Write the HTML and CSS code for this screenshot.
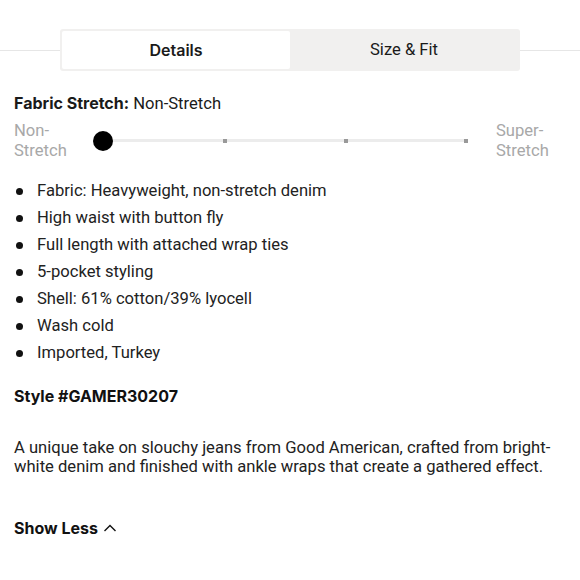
FILE: index.html
```html
<!DOCTYPE html>
<html lang="en">
<head>
	<meta charset="UTF-8">
	<title>Details</title>
	<link rel="stylesheet" href="styles.css">
</head>
<body>
	<div class="tabbar">
		<div class="tabs">
			<a class="tab active">Details</a>
			<a class="tab">Size &amp; Fit</a>
		</div>
	</div>

	<div class="content">
		<h3 class="stretch-title"><b>Fabric Stretch:</b> Non-Stretch</h3>
		<div class="stretch">
			<span class="stretch-label">Non-<br>Stretch</span>
			<div class="scale">
				<div class="track">
					<i class="tick"></i><i class="tick"></i><i class="tick"></i><i class="tick"></i>
				</div>
				<span class="knob"></span>
			</div>
			<span class="stretch-label right">Super-<br>Stretch</span>
		</div>

		<ul class="facts">
			<li>Fabric: Heavyweight, non-stretch denim</li>
			<li>High waist with button fly</li>
			<li>Full length with attached wrap ties</li>
			<li>5-pocket styling</li>
			<li>Shell: 61% cotton/39% lyocell</li>
			<li>Wash cold</li>
			<li>Imported, Turkey</li>
		</ul>

		<h3 class="style-no">Style #GAMER30207</h3>

		<p class="desc">A unique take on slouchy jeans from Good American, crafted from bright-white denim and finished with ankle wraps that create a gathered effect.</p>

		<a class="toggle">Show Less
			<svg width="14" height="10" viewBox="0 0 14 10"><path d="M1.5 8 L7 2.5 L12.5 8" fill="none" stroke="#111" stroke-width="1.4"/></svg>
		</a>
	</div>
</body>
</html>
```

FILE: styles.css
```css
*{margin:0; padding:0; box-sizing:border-box;}
body{background:#fff; color:#222; font-family:Roboto, "Liberation Sans", sans-serif; font-size:16.6px; line-height:20px;}
.tab.active,.stretch-title b,.style-no,.toggle{font-family:Inter, "Liberation Sans", sans-serif; font-size:16px;}

/* tabs with the thin rule running behind */
.tabbar{display:flex; align-items:center; margin-top:29px;}
.tabbar:before,.tabbar:after{content:""; flex:1; border-top:1px solid #e6e6e6;}
.tabs{width:460px; height:42px; display:flex; padding:2px; background:#f1f0ef; border-radius:3px;}
.tab{flex:1; display:flex; align-items:center; justify-content:center; color:#1a1a1a; cursor:pointer;}
.tab.active{background:#fff; font-weight:600; border-radius:2px;}

.content{padding:0 14px;}

.stretch-title{margin-top:22px; font-size:16.6px; font-weight:400; color:#1a1a1a;}
.stretch-title b{font-weight:700;}

.stretch{display:flex; align-items:center; margin-top:7px; height:40px;}
.stretch-label{color:#a8a8a8; width:72px;}
.stretch-label.right{width:auto; margin-left:30px;}
.scale{position:relative; width:363px; margin-left:17px; height:20px;}
.track{position:absolute; left:0; right:0; top:8px; height:3px; background:#ececec; display:flex; justify-content:space-between; align-items:center;}
.tick{display:block; width:4px; height:4px; background:#999; margin-right:-2px;}
.tick:first-child{visibility:hidden;}
.knob{position:absolute; left:-10px; top:0; width:20px; height:20px; border-radius:50%; background:#000;}

.facts{list-style:none; margin-top:16px;}
.facts li{position:relative; padding-left:23px; line-height:27px;}
.facts li:before{content:""; position:absolute; left:2px; top:11px; width:7px; height:7px; border-radius:50%; background:#111;}

.style-no{margin-top:20px; font-weight:700; color:#111;}

.desc{margin-top:32px; line-height:19px;}

.toggle{display:inline-flex; align-items:center; gap:5px; margin-top:42px; font-weight:700; color:#111; cursor:pointer;}
```
